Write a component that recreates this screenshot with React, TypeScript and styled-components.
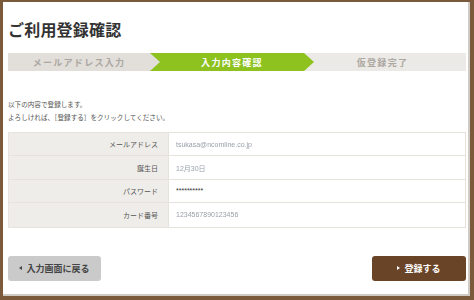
import React from "react";
import styled, { createGlobalStyle } from "styled-components";

const Global = createGlobalStyle`
  html, body { margin: 0; padding: 0; background: #fff; }
  body { font-family: "Noto Sans CJK JP", "Noto Sans", sans-serif; }
  * { box-sizing: border-box; }
`;

const Frame = styled.div`
  width: 474px;
  height: 300px;
  background: #7a5a3b;
  padding: 2px 4px 4px 3px;
  display: flex;
`;

const Panel = styled.div`
  flex: 1;
  background: #fff;
  border-right: 2px solid #cfcac4;
  border-bottom: 2px solid #cfcac4;
  padding: 17px 0 0 5px;
  display: flex;
  flex-direction: column;
  width: 467px;
`;

const Title = styled.h1`
  margin: 0;
  font-size: 16px;
  line-height: 20px;
  font-weight: 700;
  color: #333;
  letter-spacing: 0.2px;
`;

const Steps = styled.div`
  margin-top: 14px;
  display: flex;
  height: 18px;
  width: 458px;
  background: #eceae6;
`;

const Step = styled.div<{ $w?: number; $bg: string; $fg: string; $pl?: number; $pr?: number; $arrow?: boolean; $z: number }>`
  position: relative;
  z-index: ${(p) => p.$z};
  ${(p) => (p.$w ? `width: ${p.$w}px;` : "flex: 1;")}
  background: ${(p) => p.$bg};
  color: ${(p) => p.$fg};
  font-size: 9px;
  font-weight: 700;
  letter-spacing: 1.3px;
  display: flex;
  align-items: center;
  justify-content: center;
  padding-left: ${(p) => p.$pl ?? 0}px;
  padding-right: ${(p) => p.$pr ?? 0}px;
  &::after {
    content: "";
    display: ${(p) => (p.$arrow ? "block" : "none")};
    position: absolute;
    top: 0;
    right: -10px;
    width: 10px;
    height: 18px;
    background: ${(p) => p.$bg};
    clip-path: polygon(0 0, 100% 50%, 0 100%);
  }
`;

const Intro = styled.div`
  margin-top: 26.5px;
  font-size: 6.6px;
  line-height: 13px;
  color: #555;
`;

const Table = styled.div`
  margin-top: 8.5px;
  width: 458px;
  border: 1px solid #e6e2dc;
  display: grid;
  grid-template-columns: 160px 1fr;
`;

const Label = styled.div<{ $last?: boolean }>`
  height: 23.4px;
  background: #efede9;
  border-right: 1px solid #e6e2dc;
  border-bottom: ${(p) => (p.$last ? "none" : "1px solid #e6e2dc")};
  font-size: 7px;
  color: #555;
  display: flex;
  align-items: center;
  justify-content: flex-end;
  padding-right: 10px;
`;

const Value = styled.div<{ $last?: boolean; $blur?: boolean }>`
  height: 23.4px;
  border-bottom: ${(p) => (p.$last ? "none" : "1px solid #e6e2dc")};
  font-size: 7px;
  color: ${(p) => (p.$blur ? "#9aa0aa" : "#333")};
  display: flex;
  align-items: center;
  padding-left: 7px;
  font-family: "Liberation Sans", "Noto Sans CJK JP", sans-serif;
  filter: ${(p) => (p.$blur ? "blur(0.5px)" : "none")};
`;

const Buttons = styled.div`
  margin-top: 28px;
  width: 458px;
  display: flex;
  justify-content: space-between;
`;

const Button = styled.div<{ $primary?: boolean; $w: number }>`
  width: ${(p) => p.$w}px;
  height: 25px;
  border-radius: 3px;
  background: ${(p) => (p.$primary ? "#6a4427" : "#cacaca")};
  color: ${(p) => (p.$primary ? "#fff" : "#444")};
  font-size: 9px;
  font-weight: 700;
  display: flex;
  align-items: center;
  justify-content: center;
  gap: 4px;
`;

const Tri = styled.span<{ $dir: "left" | "right" }>`
  width: 0;
  height: 0;
  border-top: 2.5px solid transparent;
  border-bottom: 2.5px solid transparent;
  ${(p) => (p.$dir === "left" ? "border-right: 3px solid currentColor;" : "border-left: 3px solid currentColor;")}
`;

const rows = [
  { label: "メールアドレス", value: "tsukasa@ncomline.co.jp", blur: true },
  { label: "誕生日", value: "12月30日", blur: true },
  { label: "パスワード", value: "**********", blur: false },
  { label: "カード番号", value: "1234567890123456", blur: true },
];

export default function App() {
  return (
    <>
      <Global />
      <Frame>
        <Panel>
          <Title>ご利用登録確認</Title>
          <Steps>
            <Step $w={142} $bg="#e2dfda" $fg="#aca7a1" $arrow $z={3}>
              メールアドレス入力
            </Step>
            <Step $w={154} $bg="#8dc21f" $fg="#fff" $pl={10} $arrow $z={2}>
              入力内容確認
            </Step>
            <Step $bg="#eceae6" $fg="#aca7a1" $pr={5} $z={1}>
              仮登録完了
            </Step>
          </Steps>
          <Intro>
            以下の内容で登録します。
            <br />
            よろしければ、［登録する］をクリックしてください。
          </Intro>
          <Table>
            {rows.map((r, i) => (
              <React.Fragment key={r.label}>
                <Label $last={i === rows.length - 1}>{r.label}</Label>
                <Value $last={i === rows.length - 1} $blur={r.blur}>
                  {r.value}
                </Value>
              </React.Fragment>
            ))}
          </Table>
          <Buttons>
            <Button $w={93}>
              <Tri $dir="left" />
              入力画面に戻る
            </Button>
            <Button $w={94} $primary>
              <Tri $dir="right" />
              登録する
            </Button>
          </Buttons>
        </Panel>
      </Frame>
    </>
  );
}
